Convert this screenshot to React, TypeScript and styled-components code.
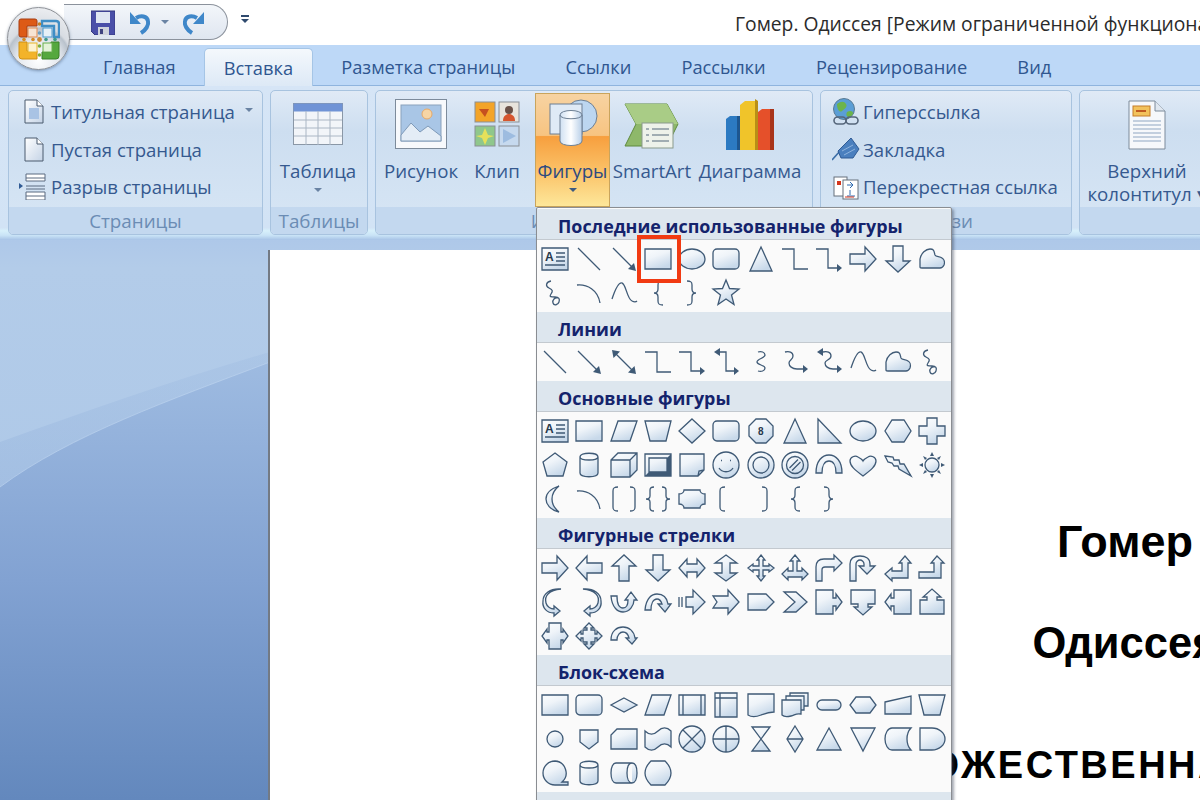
import React from 'react'
import styled, { createGlobalStyle } from 'styled-components'

const GlobalStyle = createGlobalStyle`
  html, body {
    margin: 0;
    padding: 0;
    background: #fff;
    font-family: "Open Sans", "Noto Sans", sans-serif;
  }
`

const Window = styled.div`
  position: relative;
  width: 1200px;
  height: 800px;
  overflow: hidden;
  display: flex;
  flex-direction: column;
  background: #fff;
`

const HiddenDefs = styled.svg`
  position: absolute;
  width: 0;
  height: 0;
`

/* title bar */
const TitleBar = styled.div`
  flex: none;
  height: 45px;
  display: flex;
  align-items: flex-start;
  padding-left: 64px;
  box-sizing: border-box;
`

const QuickAccess = styled.div`
  flex: none;
  width: 164px;
  height: 36px;
  margin-top: 4px;
  box-sizing: border-box;
  border: 1px solid #8b929c;
  border-left: none;
  border-radius: 0 19px 19px 0;
  background: linear-gradient(#f3f6fa, #dfe6f0);
  display: flex;
  align-items: center;
  padding-left: 27px;
  gap: 14px;
`

const UndoGroup = styled.div`
  display: flex;
  align-items: center;
  gap: 10px;
`

const TinyArrow = styled.span<{ $color?: string }>`
  display: block;
  width: 0;
  height: 0;
  border-left: 4px solid transparent;
  border-right: 4px solid transparent;
  border-top: 4px solid ${p => p.$color || '#6a83a3'};
`

const Customize = styled.div`
  flex: none;
  margin: 15px 0 0 13px;
  display: flex;
  flex-direction: column;
  gap: 2px;
  align-items: center;
  &::before {
    content: '';
    width: 8px;
    height: 2px;
    background: #2f4a6e;
  }
`

const Title = styled.div`
  margin-left: 486px;
  margin-top: 11px;
  font-size: 19.3px;
  line-height: 26px;
  color: #2b2b2b;
  white-space: nowrap;
`

const OfficeButton = styled.div`
  position: absolute;
  left: 7px;
  top: 7px;
  width: 63px;
  height: 63px;
  box-sizing: border-box;
  border-radius: 50%;
  border: 1px solid #8c9096;
  background: radial-gradient(circle at 50% 85%, #ffffff 0, #e4e8ee 35%, #b9c2cc 52%, #d8dce2 56%, #f4f5f7 100%);
  box-shadow: 0 1px 3px rgba(60, 80, 110, 0.5);
  display: flex;
  align-items: center;
  justify-content: center;
  z-index: 3;
`

/* tabs */
const TabStrip = styled.div`
  flex: none;
  height: 40px;
  display: flex;
  align-items: flex-end;
  padding-left: 78px;
  box-sizing: border-box;
  background: #bdd8f7;
  font-size: 18.3px;
  color: #2f5690;
`

const Tab = styled.div<{ $active?: boolean }>`
  height: ${p => (p.$active ? '38px' : '36px')};
  padding: 0 ${p => (p.$active ? '19px' : '25.1px')};
  line-height: ${p => (p.$active ? '38px' : '36px')};
  white-space: nowrap;
  box-sizing: border-box;
  ${p => p.$active && `
    position: relative;
    top: 1px;
    border: 1px solid #a5c5e6;
    border-bottom: none;
    border-radius: 5px 5px 0 0;
    background: linear-gradient(#f4f8fc, #dde9f6);
    margin: 0 3px 0 3px;
  `}
`

/* ribbon */
const Ribbon = styled.div`
  flex: none;
  height: 155px;
  box-sizing: border-box;
  border-top: 1px solid #8fb4de;
  padding: 4px 0 0 8px;
  display: flex;
  gap: 7px;
  overflow: hidden;
  background: linear-gradient(#d6e5f6 0, #d2e3f5 92%, #d7f0fb 94%, #c9e3f6 97%, #a7c3e6 100%);
`

const Group = styled.div<{ $w: number }>`
  flex: none;
  width: ${p => p.$w}px;
  height: 145px;
  box-sizing: border-box;
  border: 1px solid #a8c3df;
  border-radius: 5px;
  overflow: hidden;
  display: flex;
  flex-direction: column;
  background: linear-gradient(#e0eaf6 0, #cddef0 28%, #d7e6f5 100%);
`

const GroupBody = styled.div`
  flex: none;
  height: 116px;
  display: flex;
  box-sizing: border-box;
`

const GroupLabel = styled.div`
  flex: 1;
  background: #c3d8ef;
  text-align: center;
  font-size: 18.8px;
  line-height: 29px;
  color: #6b8cb4;
  white-space: nowrap;
`

const SmallColumn = styled.div`
  display: flex;
  flex-direction: column;
  padding: 2px 0 0 10px;
`

const SmallButton = styled.div`
  height: 37.5px;
  display: flex;
  align-items: center;
  gap: 3px;
  font-size: 18.6px;
  color: #35598f;
  white-space: nowrap;
`

const SmallIcon = styled.span`
  flex: none;
  width: 29px;
  height: 30px;
  display: flex;
  align-items: center;
  justify-content: center;
`

const MenuArrow = styled(TinyArrow)`
  margin-left: 7px;
  margin-top: -4px;
`

const BigButton = styled.div<{ $w: number; $ml?: number; $hot?: boolean }>`
  flex: none;
  width: ${p => p.$w}px;
  margin-left: ${p => p.$ml || 0}px;
  display: flex;
  flex-direction: column;
  align-items: center;
  box-sizing: border-box;
  font-size: 18.7px;
  line-height: 23px;
  color: ${p => (p.$hot ? '#2d4a80' : '#35598f')};
  white-space: nowrap;
  ${p => p.$hot && `
    height: 114px;
    margin-top: 2px;
    border: 1px solid #c9a45c;
    background: linear-gradient(#f7d3a2 0, #f7c481 37%, #f79f3e 38%, #fbc369 70%, #fde79a 100%);
  `}
`

const BigIcon = styled.div<{ $h: number }>`
  flex: none;
  height: ${p => p.$h}px;
  display: flex;
  align-items: flex-end;
  justify-content: center;
`

const BigText = styled.div<{ $top: number }>`
  margin-top: ${p => p.$top}px;
  text-align: center;
`

const ButtonRow = styled.div<{ $left: number }>`
  display: flex;
  padding-left: ${p => p.$left}px;
`

const DropArrow = styled(TinyArrow)`
  margin-top: 6px;
`

/* workspace */
const Workspace = styled.div`
  flex: 1;
  display: flex;
  min-height: 0;
  background: linear-gradient(#aec8e9 0, #b3cce9 5%, #a8c4e6 100%);
`

const Margin = styled.div`
  flex: none;
  width: 270px;
  position: relative;
  overflow: hidden;
`

const Swoosh = styled.svg`
  position: absolute;
  left: 0;
  top: 0;
  width: 270px;
  height: 560px;
`

const Page = styled.div`
  position: relative;
  flex: none;
  width: 1710px;
  margin-top: 10px;
  background: #fff;
  box-shadow: -2px 0 0 #737a84;
  display: flex;
  flex-direction: column;
  align-items: center;
  padding-top: 269px;
  font-family: "Liberation Sans", Arial, sans-serif;
  font-weight: bold;
  color: #000;
  white-space: nowrap;
`

const DocLine = styled.div<{ $size: number; $gap: number; $shift?: number; $spacing?: number }>`
  font-size: ${p => p.$size}px;
  line-height: 46px;
  margin-top: ${p => p.$gap}px;
  margin-left: ${p => p.$shift || 0}px;
  letter-spacing: ${p => p.$spacing || 0}px;
`

/* shapes menu */
const ShapeMenu = styled.div`
  position: absolute;
  left: 536px;
  top: 207px;
  width: 416px;
  height: 600px;
  box-sizing: border-box;
  border: 1px solid #8a8d92;
  border-radius: 2px 2px 0 0;
  background: #fafafa;
  padding-top: 1px;
  z-index: 4;
  box-shadow: 2px 2px 3px rgba(50, 60, 80, 0.45);
`

const SectionHeader = styled.div`
  height: 31px;
  box-sizing: border-box;
  border-bottom: 1px solid #c3c9cf;
  background: #dde6ee;
  padding-left: 21px;
  font-size: 17.9px;
  font-weight: bold;
  line-height: 34px;
  color: #14236c;
  white-space: nowrap;
`

const ShapeGrid = styled.div`
  display: grid;
  grid-template-columns: repeat(12, 34.25px);
  grid-auto-rows: 34px;
  padding: 2px 0 2px 1px;
`

const ShapeCell = styled.div`
  display: flex;
  align-items: center;
  justify-content: center;
`

const ShapeSvg = styled.svg`
  display: block;
  width: 28px;
  height: 28px;
  overflow: visible;
`

const Highlight = styled.div`
  position: absolute;
  left: 100px;
  top: 27px;
  width: 44px;
  height: 48px;
  box-sizing: border-box;
  border: 4px solid #f13a12;
`

/* gallery shapes, drawn on a 28x28 canvas */
type Shape = { d: string; open?: boolean; head?: string; mark?: [string, number, number, number] }

const circle = (r: number) => `M${14 - r} 14a${r} ${r} 0 1 0 ${2 * r} 0a${r} ${r} 0 1 0 ${-2 * r} 0z`

const shapes: Record<string, Shape> = {
  textbox: { d: 'M1 3h26v22H1z M15 8h9 M15 12h9 M15 16h9 M4 20h20', mark: ['A', 4, 16, 12] },
  line: { d: 'M3 3L25 25', open: true },
  arrowLine: { d: 'M3 3L22 22', open: true, head: 'M26 26l-8-2 6-6z' },
  doubleLine: { d: 'M6 6L22 22', open: true, head: 'M2 2l8 1.5-6.5 6.5z M26 26l-8-1.5 6.5-6.5z' },
  rect: { d: 'M1 4h26v20H1z' },
  oval: { d: 'M1 14a13 10 0 1 0 26 0a13 10 0 1 0-26 0z' },
  round: { d: 'M5 4h18a4 4 0 0 1 4 4v12a4 4 0 0 1-4 4H5a4 4 0 0 1-4-4V8a4 4 0 0 1 4-4z' },
  triangle: { d: 'M14 2L25 26H3z' },
  elbow: { d: 'M1 4H13V24H27', open: true },
  elbowArrow: { d: 'M1 4H13V23H23', open: true, head: 'M27 23l-5-4v8z' },
  elbowDouble: { d: 'M8 4H14V23H23', open: true, head: 'M2 4l6-4v8z M27 23l-5-4v8z' },
  arrowR: { d: 'M1 9h15V2l11 12-11 12v-7H1z' },
  arrowL: { d: 'M27 9H12V2L1 14l11 12v-7h15z' },
  arrowU: { d: 'M9 27V12H2L14 1l12 11h-7v15z' },
  arrowD: { d: 'M9 1v15H2l12 11 12-11h-7V1z' },
  cloud: { d: 'M2 22V14C3 8 8 4 12 4c4 0 4 2 5 6 1 2 5 1 7 3 2 1 3 4 2 7-1 2-2 3-4 3H4c-1 0-2 0-2-1z' },
  squiggle: { d: 'M10 2C5 3 4 7 8 9s4 3 2 6 0 3 4 3 5 2 4 5-5 4-6 1 2-6 5-5', open: true },
  arc: { d: 'M2 6C12 5 23 11 25 24', open: true },
  curve: { d: 'M2 20C6 8 9 3 12 4c4 1 5 16 10 18 2 1 4 1 5 0', open: true },
  sConnector: { d: 'M11 4c3-1 7 0 7 3s-8 4-8 7 8 3 8 6-4 4-7 3', open: true },
  curveArrow: { d: 'M4 4c4-1 8 0 8 4s-4 4-4 7 3 6 8 6h7', open: true, head: 'M27 21l-5-4v8z' },
  curveDouble: { d: 'M8 4c4-1 8 0 8 4s-6 4-6 7 3 6 8 6h5', open: true, head: 'M2 4l6-4v8z M27 21l-5-4v8z' },
  braceL: { d: 'M19 2c-4 0-5 1-5 4v4c0 3-1 4-4 4 3 0 4 1 4 4v4c0 3 1 4 5 4', open: true },
  braceR: { d: 'M9 2c4 0 5 1 5 4v4c0 3 1 4 4 4-3 0-4 1-4 4v4c0 3-1 4-5 4', open: true },
  star: { d: 'M14 1l3.5 8.5 9.5.5-7.5 6 2.5 9.5L14 20l-8 5.5 2.5-9.5L1 10l9.5-.5z' },
  parallelogram: { d: 'M8 4h19l-7 20H1z' },
  trapezoid: { d: 'M1 4h26l-5 20H6z' },
  diamond: { d: 'M14 2l13 12-13 12L1 14z' },
  octagon: { d: 'M9 2h10l7 7v10l-7 7H9l-7-7V9z', mark: ['8', 11, 18, 10] },
  rightTriangle: { d: 'M3 2l23 24H3z' },
  hexagon: { d: 'M8 3h12l7 11-7 11H8L1 14z' },
  cross: { d: 'M9 1h10v8h8v10h-8v8H9v-8H1V9h8z' },
  pentagon: { d: 'M14 2l12 9-4 14H6L2 11z' },
  can: { d: 'M5 6c0-5 18-5 18 0v16c0 5-18 5-18 0z M5 6c0 4 18 4 18 0' },
  cube: { d: 'M1 9L8 2h19v17l-7 7H1z M1 9h19v17 M20 9l7-7' },
  bevel: { d: 'M1 3h26v22H1z M5 7h18v14H5z', head: 'M1 25l4-4h18V7l4-4v22z' },
  folded: { d: 'M2 3h24v16l-6 6H2z M20 25l1-5 5-1' },
  smiley: { d: `${circle(13)} M9 9.5h1 M18 9.5h1 M7 17c3 5 11 5 14 0` },
  donut: { d: `${circle(13)} ${circle(8)}` },
  noSymbol: { d: `${circle(13)} ${circle(8.5)} M8.5 17L17 8.5 M11 19.5L19.5 11` },
  blockArc: { d: 'M1 22C1 10 7 4 14 4s13 6 13 18h-6c0-8-3-12-7-12s-7 4-7 12z' },
  heart: { d: 'M14 25C6 19 1 15 1 10c0-4 5-6 8-4 2 1 4 2 5 4 1-2 3-3 5-4 3-2 8 0 8 4 0 5-5 9-13 15z' },
  lightning: { d: 'M1 5l8 1 1 3 5 0 1 4 4 0 7 12-12-7-1-3-4 0-2-3-4-1z' },
  sun: {
    d: circle(7),
    head: 'M14 1l2 4h-4z M14 27l2-4h-4z M1 14l4-2v4z M27 14l-4-2v4z M5 5l4 2-2 2z M23 5l-2 4-2-2z M5 23l2-4 2 2z M23 23l-4-2 2-2z',
  },
  moon: { d: 'M18 1C9 4 5 9 5 14s4 11 13 13c-5-4-7-8-7-13s2-9 7-13z' },
  bracketPair: { d: 'M8 2C4 2 3 3 3 6v16c0 3 1 4 5 4 M20 2c4 0 5 1 5 4v16c0 3-1 4-5 4', open: true },
  bracePair: { d: 'M10 2c-3 0-4 1-4 3v6c0 2-1 3-4 3 3 0 4 1 4 3v6c0 2 1 3 4 3 M18 2c3 0 4 1 4 3v6c0 2 1 3 4 3-3 0-4 1-4 3v6c0 2-1 3-4 3', open: true },
  plaque: { d: 'M6 5h16c0 2 2 4 5 4v10c-3 0-5 2-5 4H6c0-2-2-4-5-4V9c3 0 5-2 5-4z' },
  bracketL: { d: 'M13 2C9 2 8 3 8 6v16c0 3 1 4 5 4', open: true },
  bracketR: { d: 'M15 2c4 0 5 1 5 4v16c0 3-1 4-5 4', open: true },
  arrowLR: { d: 'M1 14l8-9v5h10V5l8 9-8 9v-5H9v5z' },
  arrowUD: { d: 'M14 1l11 8h-7v10h7l-11 8-11-8h7V9H3z' },
  quad: { d: 'M14 1l4 5h-2v6h6v-2l5 4-5 4v-2h-6v6h2l-4 5-4-5h2v-6H6v2l-5-4 5-4v2h6V6h-2z' },
  leftRightUp: { d: 'M14 1l5 6h-3v10h5v-3l6 6-6 6v-3H7v3l-6-6 6-6v3h5V7H9z' },
  bentArrow: { d: 'M1 27V13c0-6 4-8 8-8h10V1l8 8-8 8v-4H10c-2 0-3 1-3 3v11z' },
  uturn: { d: 'M1 27V10C1 4 6 2 11 2s10 2 10 8v2h5l-8 8-8-8h5v-2c0-2-2-4-4-4s-4 2-4 4v17z' },
  leftUp: { d: 'M1 20l7-6v3h10V9h-3l6-7 6 7h-3v15H8v3z' },
  bentUp: { d: 'M1 18h15V9h-3l6-7 7 7h-3v15H1z' },
  circleLeft: { d: 'M20 1C8 2 3 8 5 15c1 4 5 6 8 6v-3l6 5-6 5v-3C6 25 1 20 2 13 2 6 9 0 20 1z' },
  circleRight: { d: 'M8 1c12 1 17 7 15 14-1 4-5 6-8 6v-3l-6 5 6 5v-3c7 0 12-5 11-12C26 6 19 0 8 1z' },
  curvedUp: { d: 'M1 8c1 12 7 16 12 16 7 0 11-7 11-12h3l-6-8-6 8h3c0 5-2 8-5 8S7 17 7 8z' },
  curvedDown: { d: 'M1 22C2 10 8 6 13 6c6 0 10 4 11 10h3l-6 8-7-8h4c-1-3-3-5-5-5-4 0-6 5-6 11z' },
  stripedR: { d: 'M8 9h7V2l12 12-12 12v-7H8z M1 9v10 M4 9v10' },
  notchedR: { d: 'M1 8h15V2l11 12-11 12v-6H1l4-6z' },
  homePlate: { d: 'M1 6h18l8 8-8 8H1z' },
  chevron: { d: 'M3 4h12l11 10-11 10H3l11-10z' },
  calloutR: { d: 'M1 2h17v8h3V6l6 8-6 8v-4h-3v8H1z' },
  calloutD: { d: 'M2 2h24v14h-7v3h4l-9 8-9-8h4v-3H2z' },
  calloutL: { d: 'M27 2H10v8H7V6l-6 8 6 8v-4h3v8h17z' },
  calloutU: { d: 'M2 26h24V12h-7V9h4l-9-8-9 8h4v3H2z' },
  calloutLR: { d: 'M8 1h12v9h2V7l5 7-5 7v-3h-2v9H8v-9H6v3l-5-7 5-7v3h2z' },
  calloutQuad: { d: 'M14 1l5 5h-3v2h4v4h2V9l5 5-5 5v-3h-2v4h-4v2h3l-5 5-5-5h3v-2H8v-4H6v3l-5-5 5-5v3h2V8h4V6H9z' },
  circular: { d: 'M1 18C1 9 7 5 13 5s11 4 12 11h2l-5 6-6-6h3c-1-4-3-6-6-6s-6 3-6 8z' },
  decision: { d: 'M14 7l13 7-13 7L1 14z' },
  predefined: { d: 'M1 4h26v20H1z M5 4v20 M23 4v20' },
  internal: { d: 'M3 2h22v24H3z M3 7h22 M8 2v24' },
  document: { d: 'M1 3h26v18c-6 0-8 1-13 3s-10 2-13 0z' },
  multidoc: { d: 'M1 9h19v14c-5-1-6 1-10 2s-7 1-9-1z M5 9V5h18v14h-3 M9 5V2h18v13h-4' },
  terminator: { d: 'M7 9h14a5 5 0 0 1 0 10H7a5 5 0 0 1 0-10z' },
  prep: { d: 'M7 6h14l6 8-6 8H7l-6-8z' },
  manualInput: { d: 'M1 11l26-6v18H1z' },
  connector: { d: circle(8) },
  offpage: { d: 'M5 5h18v12l-9 7-9-7z' },
  card: { d: 'M7 4h20v20H1V10z' },
  tape: { d: 'M1 6c4 4 9 4 13 0s9-4 13 0v16c-4-4-9-4-13 0s-9 4-13 0z' },
  summing: { d: `${circle(13)} M5 5L23 23 M23 5L5 23` },
  orGate: { d: `${circle(13)} M14 1v26 M1 14h26` },
  collate: { d: 'M5 2h18L5 26h18z' },
  sort: { d: 'M14 1l8 13-8 13-8-13z M6 14h16' },
  extract: { d: 'M14 3l12 22H2z' },
  merge: { d: 'M2 3h24L14 26z' },
  stored: { d: 'M8 3h19c-3 3-4 7-4 11s1 8 4 11H8C4 25 1 20 1 14S4 3 8 3z' },
  delay: { d: 'M2 3h12c7 0 13 5 13 11s-6 11-13 11H2z' },
  sequential: { d: 'M14 2a12 12 0 1 0 0 24h13v-3h-6A12 12 0 0 0 14 2z' },
  direct: { d: 'M6 4h16c3 0 5 4 5 10s-2 10-5 10H6c-3 0-5-4-5-10S3 4 6 4z M22 4c-3 0-5 4-5 10s2 10 5 10' },
  displayShape: { d: 'M7 2h14c3 3 6 7 6 12s-3 9-6 12H7c-3-3-6-7-6-12S4 5 7 2z' },
}

const sections: { title: string; items: string[] }[] = [
  {
    title: 'Последние использованные фигуры',
    items: ['textbox', 'line', 'arrowLine', 'rect', 'oval', 'round', 'triangle', 'elbow', 'elbowArrow', 'arrowR', 'arrowD', 'cloud',
      'squiggle', 'arc', 'curve', 'braceL', 'braceR', 'star'],
  },
  {
    title: 'Линии',
    items: ['line', 'arrowLine', 'doubleLine', 'elbow', 'elbowArrow', 'elbowDouble', 'sConnector', 'curveArrow', 'curveDouble', 'curve', 'cloud', 'squiggle'],
  },
  {
    title: 'Основные фигуры',
    items: ['textbox', 'rect', 'parallelogram', 'trapezoid', 'diamond', 'round', 'octagon', 'triangle', 'rightTriangle', 'oval', 'hexagon', 'cross',
      'pentagon', 'can', 'cube', 'bevel', 'folded', 'smiley', 'donut', 'noSymbol', 'blockArc', 'heart', 'lightning', 'sun',
      'moon', 'arc', 'bracketPair', 'bracePair', 'plaque', 'bracketL', 'bracketR', 'braceL', 'braceR'],
  },
  {
    title: 'Фигурные стрелки',
    items: ['arrowR', 'arrowL', 'arrowU', 'arrowD', 'arrowLR', 'arrowUD', 'quad', 'leftRightUp', 'bentArrow', 'uturn', 'leftUp', 'bentUp',
      'circleLeft', 'circleRight', 'curvedUp', 'curvedDown', 'stripedR', 'notchedR', 'homePlate', 'chevron', 'calloutR', 'calloutD', 'calloutL', 'calloutU',
      'calloutLR', 'calloutQuad', 'circular'],
  },
  {
    title: 'Блок-схема',
    items: ['rect', 'round', 'decision', 'parallelogram', 'predefined', 'internal', 'document', 'multidoc', 'terminator', 'prep', 'manualInput', 'trapezoid',
      'connector', 'offpage', 'card', 'tape', 'summing', 'orGate', 'collate', 'sort', 'extract', 'merge', 'stored', 'delay',
      'sequential', 'can', 'direct', 'displayShape'],
  },
  { title: 'Выноски', items: [] },
]

const STROKE = '#3f5a76'

const GalleryShape: React.FC<{ name: string }> = ({ name }) => {
  const s = shapes[name]
  return (
    <ShapeSvg viewBox="0 0 28 28">
      <path d={s.d} fill={s.open ? 'none' : 'url(#shapeFill)'} stroke={STROKE} strokeWidth={1.3} />
      {s.head && <path d={s.head} fill={STROKE} />}
      {s.mark && (
        <text x={s.mark[1]} y={s.mark[2]} fontSize={s.mark[3]} fontWeight="bold" fontFamily="Liberation Sans, sans-serif" fill="#26384c">
          {s.mark[0]}
        </text>
      )}
    </ShapeSvg>
  )
}

/* ribbon and title bar pictures */
const OfficeLogo = () => (
  <svg width="42" height="42" viewBox="0 0 42 42">
    <path d="M1 3q0-2 2-2h14q2 0 2 2v5H9v11H3q-2 0-2-2z" fill="#dd5a16" stroke="#a83c10" />
    <path d="M24 3h14q3 0 3 3v13h-5V8H24z" fill="none" stroke="#3f8ec6" strokeWidth="2.4" />
    <path d="M1 24h8v9h10v8H4q-3 0-3-3z" fill="#f3b32a" stroke="#cf8f14" />
    <path d="M33 24h8v14q0 3-3 3H24v-7h9z" fill="#55a83e" stroke="#3a8129" />
    <rect x="10" y="10" width="9" height="9" fill="#f7e4d4" stroke="#e08a50" />
    <rect x="25" y="10" width="9" height="9" fill="#e6f0f6" stroke="#4b9ad0" />
    <rect x="10" y="25" width="9" height="9" fill="#fdf2cf" stroke="#e6b32a" />
    <rect x="25" y="25" width="9" height="9" fill="#e3f2d8" stroke="#67ae4c" />
    <circle cx="21.5" cy="21.5" r="2.4" fill="#c98a3a" />
    <circle cx="21.5" cy="6" r="1.8" fill="#c3812a" />
    <circle cx="21.5" cy="15" r="1.8" fill="#6aa0c4" />
    <circle cx="21.5" cy="28" r="1.8" fill="#7fae3c" />
    <circle cx="21.5" cy="37" r="1.8" fill="#7fae3c" />
    <circle cx="6" cy="21.5" r="1.8" fill="#d68a22" />
    <circle cx="15" cy="21.5" r="1.8" fill="#d68a22" />
    <circle cx="28" cy="21.5" r="1.8" fill="#3f9a8a" />
    <circle cx="37" cy="21.5" r="1.8" fill="#3f9a8a" />
  </svg>
)

const SaveIcon = () => (
  <svg width="24" height="25" viewBox="0 0 24 25">
    <path d="M0 1h24v24H4l-4-4z" fill="#4a4fa8" stroke="#34387e" />
    <rect x="5" y="2" width="14" height="11" fill="#dfe6f2" />
    <rect x="7" y="17" width="11" height="8" fill="#cfd3dc" />
    <rect x="9" y="19" width="3" height="5" fill="#3f437f" />
  </svg>
)

const UndoIcon = () => (
  <svg width="22" height="26" viewBox="0 0 22 26">
    <path d="M12 24c5-3 8-8 7-12-1-5-7-6-12-3" fill="none" stroke="#3f87c9" strokeWidth="4" />
    <path d="M1 3v12h11z" fill="#3f87c9" />
  </svg>
)

const RedoIcon = () => (
  <svg width="22" height="26" viewBox="0 0 22 26">
    <path d="M9 24C4 21 1 16 2 12c1-5 7-6 12-3" fill="none" stroke="#3f87c9" strokeWidth="4" />
    <path d="M21 3v12H10z" fill="#3f87c9" />
  </svg>
)

const DocSheet: React.FC<{ w: number; h: number; children?: React.ReactNode }> = ({ w, h, children }) => (
  <svg width={w} height={h} viewBox={`0 0 ${w} ${h}`}>
    <path d={`M1 1h${w - 8}l6 6v${h - 8}H1z`} fill="url(#sheetFill)" stroke="#4a5a6e" />
    <path d={`M${w - 7} 1v6h6`} fill="#fff" stroke="#4a5a6e" />
    {children}
  </svg>
)

const BreakIcon = () => (
  <svg width="29" height="27" viewBox="0 0 29 27">
    <path d="M0 10l4 3-4 3z" fill="#2f5a94" />
    <path d="M7 1h19v7H7zM7 19h19v8H7z" fill="#fff" stroke="#5a6b80" />
    <path d="M7 5h19M7 13h19M7 16h19M7 23h19" stroke="#5a6b80" />
  </svg>
)

const TableIcon = () => (
  <svg width="50" height="43" viewBox="0 0 50 43">
    <rect x="0.5" y="0.5" width="49" height="41" fill="#f2f5f9" stroke="#8a97a6" />
    <rect x="0.5" y="0.5" width="49" height="8" fill="#6f93d6" />
    <path d="M1 17h48M1 25h48M1 33h48M13 8v34M25 8v34M37 8v34" stroke="#aab6c4" />
  </svg>
)

const PictureIcon = () => (
  <svg width="52" height="50" viewBox="0 0 52 50">
    <rect x="0.5" y="0.5" width="51" height="49" fill="#f7f9fc" stroke="#7d8b9b" />
    <rect x="6" y="6" width="40" height="36" fill="#a9c6e6" stroke="#8aa2bc" />
    <circle cx="32" cy="15" r="5" fill="#f6d5a5" stroke="#e6a968" />
    <path d="M6 36l10-12 9 9 8-6 13 10v5H6z" fill="#e4edf6" stroke="#7f9ab8" />
  </svg>
)

const ClipIcon = () => (
  <svg width="46" height="47" viewBox="0 0 46 47">
    <rect x="1" y="1" width="20" height="20" fill="#f3a428" stroke="#8a8f96" />
    <path d="M5 8h10l-4 8z" fill="#c6501f" />
    <rect x="25" y="1" width="20" height="20" fill="#e8e4dc" stroke="#8a8f96" />
    <circle cx="35" cy="9" r="4" fill="#6a5148" />
    <path d="M29 20c0-5 3-7 6-7s6 2 6 7z" fill="#d6562e" />
    <rect x="1" y="25" width="20" height="20" fill="#8fc78c" stroke="#8a8f96" />
    <path d="M11 27l3 7 6 1-6 2-3 7-3-7-6-2 6-1z" fill="#e6e15a" />
    <rect x="25" y="25" width="20" height="20" fill="#c6d9ee" stroke="#8a8f96" />
    <path d="M29 28l13 7-13 7z" fill="#9dbce0" />
  </svg>
)

const ShapesIcon = () => (
  <svg width="50" height="50" viewBox="0 0 50 50">
    <circle cx="33" cy="18" r="16" fill="#bcd6f0" stroke="#6d7f93" />
    <rect x="2" y="6" width="32" height="30" fill="#dfeaf6" stroke="#6d7f93" />
    <path d="M12 17c0-6 22-6 22 0v26c0 6-22 6-22 0z" fill="url(#canFill)" stroke="#6d7f93" />
    <path d="M12 17c0 5 22 5 22 0" fill="none" stroke="#6d7f93" />
  </svg>
)

const SmartArtIcon = () => (
  <svg width="56" height="46" viewBox="0 0 56 46">
    <path d="M1 1h42l11 20-11 22H1l11-22z" fill="#8eb86a" stroke="#5f8a3e" />
    <path d="M1 1h42l11 20H12z" fill="#a9cc86" />
    <rect x="18" y="20" width="31" height="25" fill="#eef2ea" stroke="#8a9a8c" />
    <path d="M22 26h3M28 26h17M22 32h3M28 32h17M22 38h3M28 38h17" stroke="#55697a" />
  </svg>
)

const ChartIcon = () => (
  <svg width="50" height="52" viewBox="0 0 50 52">
    <path d="M1 20l4-3h10v34H1z" fill="#2c7ac2" />
    <path d="M15 6l5-4h13v49H15z" fill="#f0c42a" />
    <path d="M30 0l3 2v49h-3z" fill="#b98f16" />
    <path d="M33 13l4-3h12v41H33z" fill="#e5502a" />
    <path d="M45 10h4v41h-4z" fill="#a8341a" />
    <path d="M12 17h3v34h-3z" fill="#1d5690" />
  </svg>
)

const LinkIcon = () => (
  <svg width="28" height="28" viewBox="0 0 28 28">
    <circle cx="12" cy="11" r="10.5" fill="#5a9ed6" stroke="#5a7a92" />
    <path d="M5 6c4-3 7-3 9 0s-2 5-4 7-5-1-5-7zM15 14c3-2 6-1 6 1s-3 5-5 4-2-3-1-5z" fill="#6cb44c" />
    <rect x="2" y="19" width="12" height="7" rx="3.5" fill="none" stroke="#55657a" strokeWidth="1.6" />
    <rect x="14" y="19" width="12" height="7" rx="3.5" fill="none" stroke="#55657a" strokeWidth="1.6" />
  </svg>
)

const BookmarkIcon = () => (
  <svg width="28" height="24" viewBox="0 0 28 24">
    <path d="M0 23L17 4" stroke="#3d6fa8" strokeWidth="1.6" />
    <path d="M6 14L19 1l8 11-6 9H9z" fill="#4a7fbe" stroke="#2f5a94" />
    <path d="M10 14l11-6M12 18l11-6" stroke="#8fb4de" />
  </svg>
)

const CrossRefIcon = () => (
  <svg width="26" height="26" viewBox="0 0 26 26">
    <rect x="1" y="3" width="13" height="19" fill="#fff" stroke="#66707c" />
    <rect x="10" y="6" width="15" height="19" fill="#fff" stroke="#66707c" />
    <rect x="4" y="7" width="4" height="4" fill="#d4351c" />
    <path d="M14 11h6l-3-3M20 11l-3 3" stroke="#2f6ab0" fill="none" />
    <path d="M17 16v5M14 22h8" stroke="#2f6ab0" />
    <path d="M12 23h9" stroke="#d4351c" />
  </svg>
)

const HeaderIcon = () => (
  <svg width="38" height="50" viewBox="0 0 38 50">
    <path d="M1 1h26l10 10v38H1z" fill="#f6f8fb" stroke="#7d8b9b" />
    <path d="M27 1v10h10" fill="#dfe7f0" stroke="#7d8b9b" />
    <rect x="5" y="6" width="17" height="10" fill="#f2c25c" stroke="#c47c28" />
    <rect x="8" y="10" width="10" height="2" fill="#c05a20" />
    <path d="M5 21h28M5 25h28M5 29h28M5 33h28M5 37h28M5 41h28" stroke="#8fa6c2" />
  </svg>
)

const App: React.FC = () => (
  <Window>
    <GlobalStyle />
    <HiddenDefs>
      <defs>
        <linearGradient id="shapeFill" x1="0" y1="0" x2="0.5" y2="1">
          <stop offset="0" stopColor="#fbfdfe" />
          <stop offset="0.45" stopColor="#eff4f9" />
          <stop offset="1" stopColor="#c8d9ea" />
        </linearGradient>
        <linearGradient id="sheetFill" x1="0" y1="0" x2="1" y2="1">
          <stop offset="0" stopColor="#fff" />
          <stop offset="1" stopColor="#c4d3e6" />
        </linearGradient>
        <linearGradient id="canFill" x1="0" y1="0" x2="1" y2="0">
          <stop offset="0" stopColor="#cfe0f2" />
          <stop offset="0.5" stopColor="#fff" />
          <stop offset="1" stopColor="#b8cfe8" />
        </linearGradient>
        <linearGradient id="marginFill" gradientUnits="userSpaceOnUse" x1="0" y1="120" x2="0" y2="560">
          <stop offset="0" stopColor="#9ebbe1" />
          <stop offset="0.5" stopColor="#82a2d2" />
          <stop offset="1" stopColor="#6388bd" />
        </linearGradient>
      </defs>
    </HiddenDefs>

    <TitleBar>
      <QuickAccess>
        <SaveIcon />
        <UndoGroup>
          <UndoIcon />
          <TinyArrow />
        </UndoGroup>
        <RedoIcon />
      </QuickAccess>
      <Customize>
        <TinyArrow $color="#2f4a6e" />
      </Customize>
      <Title>Гомер. Одиссея [Режим ограниченной функциональности] - Microsoft Word</Title>
    </TitleBar>
    <OfficeButton>
      <OfficeLogo />
    </OfficeButton>

    <TabStrip>
      <Tab>Главная</Tab>
      <Tab $active>Вставка</Tab>
      <Tab>Разметка страницы</Tab>
      <Tab>Ссылки</Tab>
      <Tab>Рассылки</Tab>
      <Tab>Рецензирование</Tab>
      <Tab>Вид</Tab>
    </TabStrip>

    <Ribbon>
      <Group $w={255}>
        <GroupBody>
          <SmallColumn>
            <SmallButton>
              <SmallIcon>
                <DocSheet w={20} h={25}>
                  <rect x="5" y="9" width="10" height="11" fill="#a9c3e4" />
                </DocSheet>
              </SmallIcon>
              Титульная страница
              <MenuArrow />
            </SmallButton>
            <SmallButton>
              <SmallIcon>
                <DocSheet w={20} h={25} />
              </SmallIcon>
              Пустая страница
            </SmallButton>
            <SmallButton>
              <SmallIcon>
                <BreakIcon />
              </SmallIcon>
              Разрыв страницы
            </SmallButton>
          </SmallColumn>
        </GroupBody>
        <GroupLabel>Страницы</GroupLabel>
      </Group>

      <Group $w={98}>
        <GroupBody>
          <BigButton $w={94}>
            <BigIcon $h={55}>
              <TableIcon />
            </BigIcon>
            <BigText $top={13}>Таблица</BigText>
            <DropArrow />
          </BigButton>
        </GroupBody>
        <GroupLabel>Таблицы</GroupLabel>
      </Group>

      <Group $w={438}>
        <GroupBody>
          <ButtonRow $left={1}>
            <BigButton $w={88}>
              <BigIcon $h={58}>
                <PictureIcon />
              </BigIcon>
              <BigText $top={10}>Рисунок</BigText>
            </BigButton>
            <BigButton $w={60} $ml={2}>
              <BigIcon $h={57}>
                <ClipIcon />
              </BigIcon>
              <BigText $top={11}>Клип</BigText>
            </BigButton>
            <BigButton $w={75} $ml={8} $hot>
              <BigIcon $h={54}>
                <ShapesIcon />
              </BigIcon>
              <BigText $top={11}>Фигуры</BigText>
              <DropArrow $color="#3d5a80" />
            </BigButton>
            <BigButton $w={78} $ml={3}>
              <BigIcon $h={58}>
                <SmartArtIcon />
              </BigIcon>
              <BigText $top={10}>SmartArt</BigText>
            </BigButton>
            <BigButton $w={112} $ml={3}>
              <BigIcon $h={60}>
                <ChartIcon />
              </BigIcon>
              <BigText $top={8}>Диаграмма</BigText>
            </BigButton>
          </ButtonRow>
        </GroupBody>
        <GroupLabel>Иллюстрации</GroupLabel>
      </Group>

      <Group $w={252}>
        <GroupBody>
          <SmallColumn>
            <SmallButton>
              <SmallIcon>
                <LinkIcon />
              </SmallIcon>
              Гиперссылка
            </SmallButton>
            <SmallButton>
              <SmallIcon>
                <BookmarkIcon />
              </SmallIcon>
              Закладка
            </SmallButton>
            <SmallButton>
              <SmallIcon>
                <CrossRefIcon />
              </SmallIcon>
              Перекрестная ссылка
            </SmallButton>
          </SmallColumn>
        </GroupBody>
        <GroupLabel>Связи</GroupLabel>
      </Group>

      <Group $w={420}>
        <GroupBody>
          <ButtonRow $left={7}>
            <BigButton $w={120}>
              <BigIcon $h={59}>
                <HeaderIcon />
              </BigIcon>
              <BigText $top={9}>
                Верхний
                <br />
                колонтитул ▾
              </BigText>
            </BigButton>
          </ButtonRow>
        </GroupBody>
        <GroupLabel>Колонтитулы</GroupLabel>
      </Group>
    </Ribbon>

    <Workspace>
      <Margin>
        <Swoosh viewBox="0 0 270 560">
          <path d="M0 202C90 170 180 138 270 112V560H0z" fill="url(#marginFill)" fillOpacity="0.35" />
          <path d="M0 247C70 195 170 160 270 122V560H0z" fill="url(#marginFill)" />
          <path d="M0 247C70 195 170 160 270 122" fill="none" stroke="#bcd3ee" strokeOpacity="0.7" />
        </Swoosh>
      </Margin>
      <Page>
        <DocLine $size={45} $gap={0}>Гомер</DocLine>
        <DocLine $size={43.5} $gap={55}>Одиссея</DocLine>
        <DocLine $size={38} $gap={76} $shift={140} $spacing={2.5}>ХУДОЖЕСТВЕННАЯ ЛИТЕРАТУРА</DocLine>
      </Page>
    </Workspace>

    <ShapeMenu>
      {sections.map(section => (
        <React.Fragment key={section.title}>
          <SectionHeader>{section.title}</SectionHeader>
          <ShapeGrid>
            {section.items.map((name, i) => (
              <ShapeCell key={`${name}-${i}`}>
                <GalleryShape name={name} />
              </ShapeCell>
            ))}
          </ShapeGrid>
        </React.Fragment>
      ))}
      <Highlight />
    </ShapeMenu>
  </Window>
)

export default App
